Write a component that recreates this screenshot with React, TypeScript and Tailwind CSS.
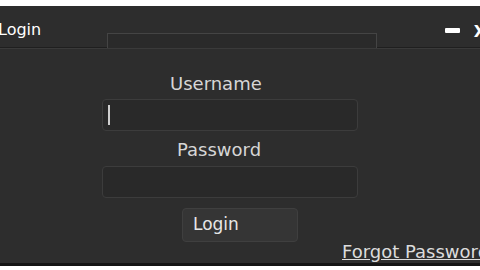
export default function App() {
  return (
    <div className="w-[480px] h-[270px] bg-white flex flex-col overflow-hidden font-['DejaVu_Sans',sans-serif]">
      <div className="h-[6px] bg-white" />
      <div className="flex-1 flex flex-col bg-[#2d2d2d]">
        {/* title bar */}
        <div className="h-[42px] flex items-center relative border-b border-[#1f1f1f] shadow-[0_1px_0_#3a3a3a]">
          <span className="text-[16px] text-white ml-[-2px] mt-[6px]">Login</span>
          <div className="absolute left-[107px] top-[27px] w-[270px] h-[15px] border-t border-x border-[#444] bg-[#2a2a2a]" />
          <div className="absolute right-[20px] top-[22px] w-[15px] h-[5px] bg-white rounded-[1px]" />
          <span className="absolute right-[-6px] top-[14px] text-[16px] font-bold text-white">X</span>
        </div>
        {/* form */}
        <div className="flex-1 flex flex-col items-start relative pt-[26px] pl-[102px]">
          <div className="ml-[68px] text-[18px] leading-[20px] text-[#d6d6d6]">Username</div>
          <div className="mt-[5px] w-[256px] h-[32px] rounded-[4px] bg-[#292929] border border-[#3c3c3c] flex items-center pl-[5px]">
            <div className="w-[2px] h-[20px] bg-[#cfcfcf]" />
          </div>
          <div className="ml-[75px] mt-[9px] text-[18px] leading-[20px] text-[#d6d6d6]">Password</div>
          <div className="mt-[6px] w-[256px] h-[32px] rounded-[4px] bg-[#292929] border border-[#3c3c3c]" />
          <div className="ml-[80px] mt-[10px] w-[116px] h-[34px] rounded-[4px] bg-[#353535] border border-[#3f3f3f] flex items-center pl-[10px] text-[17px] text-[#e6e6e6]">
            Login
          </div>
          <span className="absolute left-[342px] bottom-[1px] text-[18px] leading-[20px] text-[#dcdcdc] underline whitespace-nowrap">
            Forgot Password
          </span>
        </div>
        <div className="h-[3px] bg-[#141414]" />
      </div>
      <div className="h-[4px] bg-white" />
    </div>
  );
}
